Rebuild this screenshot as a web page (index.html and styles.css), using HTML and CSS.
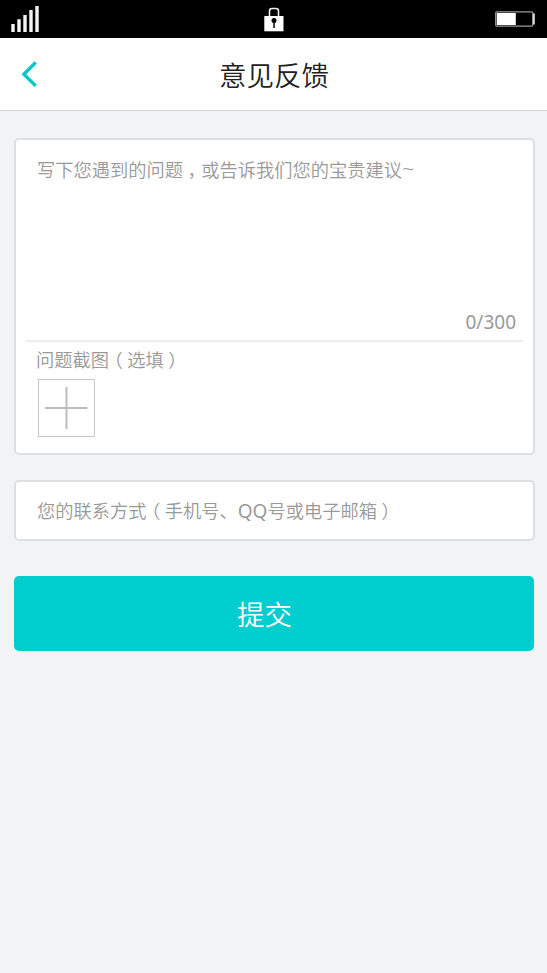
FILE: index.html
```html
<!DOCTYPE html>
<html lang="zh-CN">
<head>
<meta charset="utf-8">
<title>意见反馈</title>
<link rel="stylesheet" href="styles.css">
</head>
<body>
<div class="status">
  <svg class="signal" width="28" height="26" viewBox="0 0 28 26" fill="#f4f4f4"><path d="M.3 18h3.400v8H.3zM6.300 13.300h3.400V26H6.300zM12.300 9h3.400v17h-3.400zM18.300 4h3.400v22h-3.400zM24.300 0h3.400v26h-3.400z"/></svg>
  <svg class="lock" width="20" height="25" viewBox="0 0 20 25"><path d="M5.500 10V4Q5.500 1.500 8 1.500H12Q14.500 1.500 14.500 4V10" fill="none" stroke="#eee" stroke-width="1.600"/><path d="M.3 9h19.200v15.300H.3z" fill="#fff"/><circle cx="10" cy="13.500" r="2.500"/><path d="M9.300 14h1.500v7H9.300z"/></svg>
  <svg class="battery" width="40" height="16" viewBox="0 0 40 16"><rect x=".7" y=".9" width="37" height="14.200" rx="1" fill="none" stroke="#999" stroke-width="1.300"/><path d="M1.800 2h19v12h-19z" fill="#fff"/><path d="M38 2.500h1.800v11H38z" fill="#ddd"/></svg>
</div>
<header class="header">
  <svg class="back" width="18" height="28" viewBox="0 0 18 28"><path d="M15.700 2.400L3.900 14.200l11.800 11.700" fill="none" stroke="#00c8c8" stroke-width="3.400"/></svg>
  <h1>意见反馈</h1>
</header>
<main>
  <section class="card">
    <div class="message">
      <p>写下您遇到的问题<span class="punct">，</span>或告诉我们您的宝贵建议<span class="tilde">~</span></p>
      <span class="count">0/300</span>
    </div>
    <div class="shots">
      <p>问题截图<span class="punct">（</span>选填<span class="punct">）</span></p>
      <div class="add"><svg width="55" height="56" viewBox="0 0 55 56"><path d="M6 28H48.500M27.500 7V49" stroke="#bdbdbd" stroke-width="2"/></svg></div>
    </div>
  </section>
  <div class="contact"><p>您的联系方式<span class="punct">（</span>手机号、<span class="latin">QQ</span>号或电子邮箱<span class="punct">）</span></p></div>
  <div class="submit">提交</div>
</main>
</body>
</html>
```
FILE: styles.css
```css
* { box-sizing: border-box; }
body {
  margin: 0;
  min-height: 973px;
  background: #f2f3f5;
  color: #999;
  font: 350 18.25px/26px "Noto Sans", "Noto Sans CJK SC", sans-serif;
}
p, h1 { margin: 0; font-weight: inherit; white-space: nowrap; }
svg { display: block; }
.status {
  display: grid;
  grid-template-columns: 1fr auto 1fr;
  height: 38px;
  padding: 0 12px 0 11px;
  background: #000;
}
.signal { margin-top: 6px; }
.lock { margin: 7px -1px 0 1px; }
.battery { margin-top: 11px; justify-self: end; }
.header {
  display: grid;
  grid-template-columns: 40px 1fr 40px;
  align-items: center;
  height: 73px;
  padding-left: 1px;
  background: #fff;
  border-bottom: 1px solid #d6d7d9;
}
.back { margin-left: 19px; }
.header h1 {
  padding-top: 3px;
  color: #222;
  font-size: 27.5px;
  line-height: 40px;
  text-align: center;
}
main { padding: 27px 12px 0 14px; }
.card, .contact {
  background: #fff;
  border: 2px solid #dddfe1;
  border-radius: 5px;
}
.card { height: 317px; padding: 0 10px; }
.message {
  display: flex;
  flex-direction: column;
  justify-content: space-between;
  height: 202px;
  padding: 16px 7px 5px 11px;
  border-bottom: 2px solid #eee;
}
.count { align-self: flex-end; font-size: 19px; font-weight: 400; }
.shots { padding: 4px 0 0 10px; }
.add {
  width: 57px;
  height: 58px;
  margin: 6px 0 0 2px;
  border: 1px solid #c6c6c6;
}
/* Half-width punctuation centred in a full-width cell */
.punct {
  margin: 0 .25em;
  font-family: "Noto Sans CJK SC", sans-serif;
  font-feature-settings: "halt";
}
.latin { font-size: 19px; font-weight: 400; }
.tilde { font-size: 22px; line-height: 1; }
.contact { height: 61px; margin-top: 25px; padding: 15px 21px; }
.submit {
  width: 520px;
  height: 75px;
  margin-top: 35px;
  padding: 1px 19px 0 0;
  border-radius: 5px;
  background: #00cdcd;
  color: #fff;
  font-size: 27.5px;
  line-height: 75px;
  text-align: center;
}
```
